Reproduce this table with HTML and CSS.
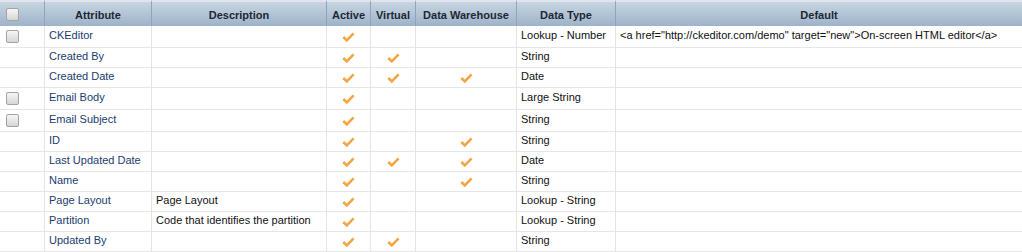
FILE: index.html
```html
<!DOCTYPE html>
<html>
<head>
<meta charset="utf-8">
<link rel="stylesheet" href="styles.css">
</head>
<body>
<table class="grid">
  <thead>
    <tr>
      <th class="c-sel"><span class="cb"></span></th>
      <th class="c-attr">Attribute</th>
      <th class="c-desc">Description</th>
      <th class="c-act">Active</th>
      <th class="c-virt">Virtual</th>
      <th class="c-dw">Data Warehouse</th>
      <th class="c-type">Data Type</th>
      <th class="c-def">Default</th>
    </tr>
  </thead>
  <tbody>
    <tr class="tall">
      <td class="sel"><span class="cb"></span></td>
      <td class="attr">CKEditor</td>
      <td></td>
      <td class="chk"><svg class="tick" viewBox="0 0 13 10"><polyline points="1.3,5 4.8,8.4 11.6,1.4"/></svg></td>
      <td class="chk"></td>
      <td class="chk"></td>
      <td>Lookup - Number</td>
      <td>&lt;a href="http://ckeditor.com/demo" target="new"&gt;On-screen HTML editor&lt;/a&gt;</td>
    </tr>
    <tr>
      <td class="sel"></td>
      <td class="attr">Created By</td>
      <td></td>
      <td class="chk"><svg class="tick" viewBox="0 0 13 10"><polyline points="1.3,5 4.8,8.4 11.6,1.4"/></svg></td>
      <td class="chk"><svg class="tick" viewBox="0 0 13 10"><polyline points="1.3,5 4.8,8.4 11.6,1.4"/></svg></td>
      <td class="chk"></td>
      <td>String</td>
      <td></td>
    </tr>
    <tr>
      <td class="sel"></td>
      <td class="attr">Created Date</td>
      <td></td>
      <td class="chk"><svg class="tick" viewBox="0 0 13 10"><polyline points="1.3,5 4.8,8.4 11.6,1.4"/></svg></td>
      <td class="chk"><svg class="tick" viewBox="0 0 13 10"><polyline points="1.3,5 4.8,8.4 11.6,1.4"/></svg></td>
      <td class="chk"><svg class="tick" viewBox="0 0 13 10"><polyline points="1.3,5 4.8,8.4 11.6,1.4"/></svg></td>
      <td>Date</td>
      <td></td>
    </tr>
    <tr class="tall">
      <td class="sel"><span class="cb"></span></td>
      <td class="attr">Email Body</td>
      <td></td>
      <td class="chk"><svg class="tick" viewBox="0 0 13 10"><polyline points="1.3,5 4.8,8.4 11.6,1.4"/></svg></td>
      <td class="chk"></td>
      <td class="chk"></td>
      <td>Large String</td>
      <td></td>
    </tr>
    <tr class="tall">
      <td class="sel"><span class="cb"></span></td>
      <td class="attr">Email Subject</td>
      <td></td>
      <td class="chk"><svg class="tick" viewBox="0 0 13 10"><polyline points="1.3,5 4.8,8.4 11.6,1.4"/></svg></td>
      <td class="chk"></td>
      <td class="chk"></td>
      <td>String</td>
      <td></td>
    </tr>
    <tr>
      <td class="sel"></td>
      <td class="attr">ID</td>
      <td></td>
      <td class="chk"><svg class="tick" viewBox="0 0 13 10"><polyline points="1.3,5 4.8,8.4 11.6,1.4"/></svg></td>
      <td class="chk"></td>
      <td class="chk"><svg class="tick" viewBox="0 0 13 10"><polyline points="1.3,5 4.8,8.4 11.6,1.4"/></svg></td>
      <td>String</td>
      <td></td>
    </tr>
    <tr>
      <td class="sel"></td>
      <td class="attr">Last Updated Date</td>
      <td></td>
      <td class="chk"><svg class="tick" viewBox="0 0 13 10"><polyline points="1.3,5 4.8,8.4 11.6,1.4"/></svg></td>
      <td class="chk"><svg class="tick" viewBox="0 0 13 10"><polyline points="1.3,5 4.8,8.4 11.6,1.4"/></svg></td>
      <td class="chk"><svg class="tick" viewBox="0 0 13 10"><polyline points="1.3,5 4.8,8.4 11.6,1.4"/></svg></td>
      <td>Date</td>
      <td></td>
    </tr>
    <tr>
      <td class="sel"></td>
      <td class="attr">Name</td>
      <td></td>
      <td class="chk"><svg class="tick" viewBox="0 0 13 10"><polyline points="1.3,5 4.8,8.4 11.6,1.4"/></svg></td>
      <td class="chk"></td>
      <td class="chk"><svg class="tick" viewBox="0 0 13 10"><polyline points="1.3,5 4.8,8.4 11.6,1.4"/></svg></td>
      <td>String</td>
      <td></td>
    </tr>
    <tr>
      <td class="sel"></td>
      <td class="attr">Page Layout</td>
      <td>Page Layout</td>
      <td class="chk"><svg class="tick" viewBox="0 0 13 10"><polyline points="1.3,5 4.8,8.4 11.6,1.4"/></svg></td>
      <td class="chk"></td>
      <td class="chk"></td>
      <td>Lookup - String</td>
      <td></td>
    </tr>
    <tr>
      <td class="sel"></td>
      <td class="attr">Partition</td>
      <td>Code that identifies the partition</td>
      <td class="chk"><svg class="tick" viewBox="0 0 13 10"><polyline points="1.3,5 4.8,8.4 11.6,1.4"/></svg></td>
      <td class="chk"></td>
      <td class="chk"></td>
      <td>Lookup - String</td>
      <td></td>
    </tr>
    <tr>
      <td class="sel"></td>
      <td class="attr">Updated By</td>
      <td></td>
      <td class="chk"><svg class="tick" viewBox="0 0 13 10"><polyline points="1.3,5 4.8,8.4 11.6,1.4"/></svg></td>
      <td class="chk"><svg class="tick" viewBox="0 0 13 10"><polyline points="1.3,5 4.8,8.4 11.6,1.4"/></svg></td>
      <td class="chk"></td>
      <td>String</td>
      <td></td>
    </tr>
  </tbody>
</table>
</body>
</html>
```

FILE: styles.css
```css
html, body {
  margin: 0;
  padding: 0;
  background: #ffffff;
}

.grid {
  width: 1022px;
  table-layout: fixed;
  border-collapse: separate;
  border-spacing: 0;
  font-family: "Liberation Sans", Arial, sans-serif;
  font-size: 11px;
  color: #111111;
}

.grid th,
.grid td {
  box-sizing: border-box;
  padding: 0 4px;
  white-space: nowrap;
  overflow: hidden;
}

.grid th {
  height: 26px;
  border-top: 2px solid #e2e4ee;
  border-right: 1px solid #8ea4bb;
  background: linear-gradient(#c8d5e2, #9db3c9);
  font-weight: bold;
  color: #1d2733;
  text-align: center;
  vertical-align: middle;
  padding-top: 1px;
}

.grid th:last-child {
  border-right: none;
}

.grid td {
  height: 20px;
  border-right: 1px solid #e4e4e4;
  border-bottom: 1px solid #e6e6e6;
  vertical-align: middle;
  line-height: 13px;
  padding-bottom: 2px;
}

.grid td:last-child {
  border-right: none;
}

.grid tr.tall td {
  height: 22px;
}

.c-sel { width: 45px; }
.c-attr { width: 107px; }
.c-desc { width: 175px; }
.c-act { width: 44px; }
.c-virt { width: 45px; }
.c-dw { width: 101px; }
.c-type { width: 99px; }
.c-def { width: 406px; }

.grid .sel {
  padding: 0 0 0 6px;
}

.grid th.c-sel {
  padding: 0 0 0 6px;
  text-align: left;
}

.cb {
  display: block;
  width: 13px;
  height: 13px;
  box-sizing: border-box;
  border: 1px solid #a3a3a3;
  border-radius: 2px;
  background: linear-gradient(#f6f6f6, #d6d6d6);
}

.grid td.attr {
  color: #1b3c6f;
}

.grid td.chk {
  text-align: center;
  padding: 0;
}

.tick {
  display: inline-block;
  width: 13px;
  height: 10px;
  vertical-align: middle;
  margin-top: -1px;
}

.tick polyline {
  fill: none;
  stroke: #f5a544;
  stroke-width: 2.6;
}
```
